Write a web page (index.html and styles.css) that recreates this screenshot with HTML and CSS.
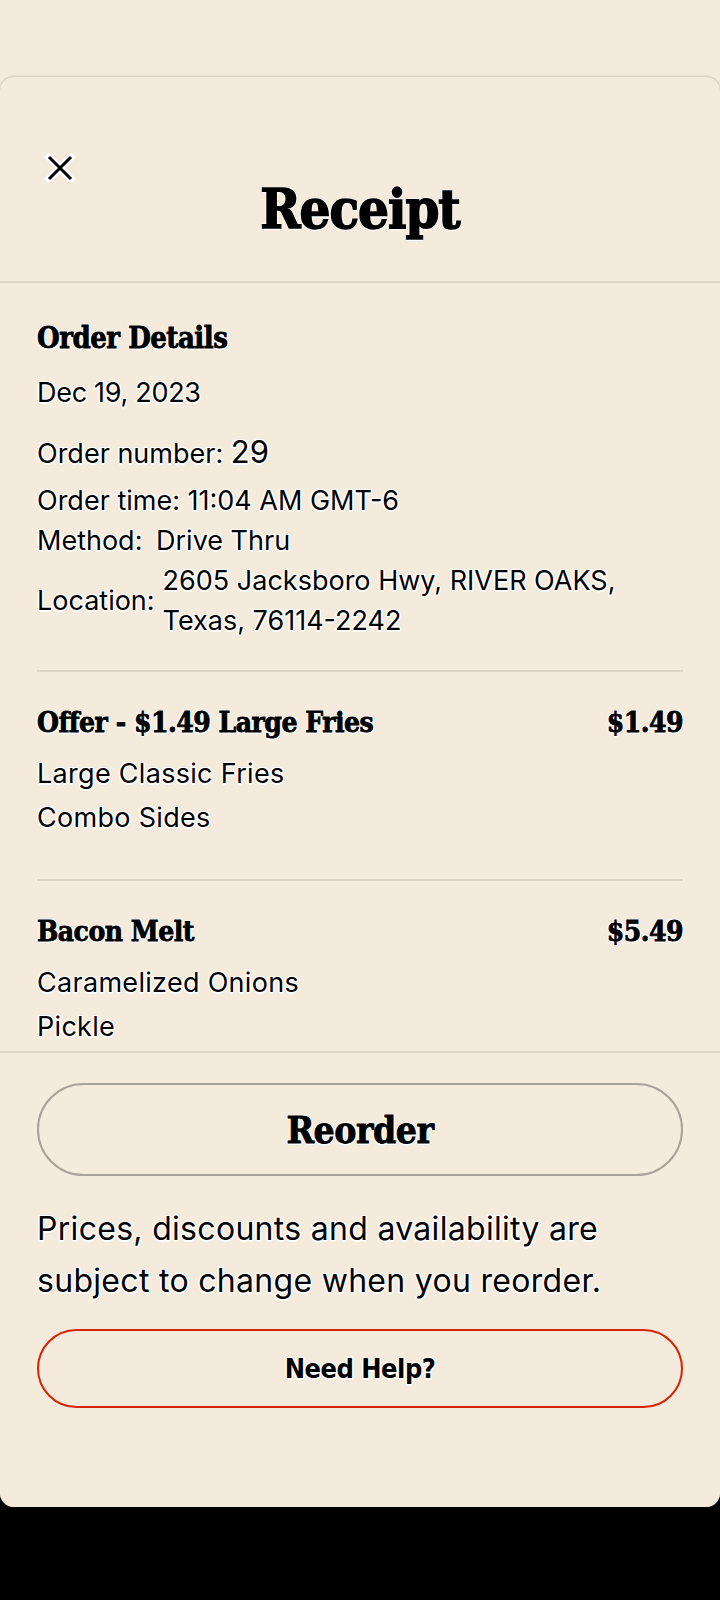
FILE: index.html
```html
<!DOCTYPE html>
<html lang="en">
  <head>
    <meta charset="UTF-8" />
    <meta name="viewport" content="width=device-width, initial-scale=1.0" />
    <title>Receipt</title>
    <link rel="stylesheet" href="styles.css">
  </head>
  <body>
    <div class="app">
      <div class="sheet">
        <div class="sheet-header">
          <button class="close-button" aria-label="Close">
            <svg width="30" height="30" viewBox="0 0 30 30">
              <path d="M4 4L26 26M26 4L4 26" stroke="#fff" stroke-width="7" stroke-linecap="round" fill="none" />
              <path d="M4 4L26 26M26 4L4 26" stroke="#000" stroke-width="3" fill="none" />
            </svg>
          </button>
          <h1 class="sheet-title">Receipt</h1>
        </div>

        <div class="receipt-body">
          <div class="order-details">
            <h2 class="section-title">Order Details</h2>
            <p class="order-date">Dec 19, 2023</p>
            <p class="detail-row order-number">Order number: <span class="big-number">29</span></p>
            <p class="detail-row">Order time: 11:04 AM GMT-6</p>
            <p class="detail-row method">Method: <span>Drive Thru</span></p>
            <div class="detail-row location">
              <span>Location:</span>
              <span class="address">2605 Jacksboro Hwy, RIVER OAKS,<br />Texas, 76114-2242</span>
            </div>
          </div>

          <div class="order-item">
            <div class="item-head">
              <span>Offer - $1.49 Large Fries</span>
              <span>$1.49</span>
            </div>
            <p class="item-option">Large Classic Fries</p>
            <p class="item-option">Combo Sides</p>
          </div>

          <div class="order-item">
            <div class="item-head">
              <span>Bacon Melt</span>
              <span>$5.49</span>
            </div>
            <p class="item-option">Caramelized Onions</p>
            <p class="item-option">Pickle</p>
          </div>
        </div>

        <div class="sheet-footer">
          <button class="reorder-button">Reorder</button>
          <p class="reorder-note">Prices, discounts and availability are subject to change when you reorder.</p>
          <button class="help-button">Need Help?</button>
        </div>
      </div>
    </div>
  </body>
</html>
```

FILE: styles.css
```css
* {
  box-sizing: border-box;
  margin: 0;
  padding: 0;
}

body {
  background-color: #000;
  font-family: Inter, Roboto, "Liberation Sans", sans-serif;
  color: #000;
}

.app {
  height: 1507px;
  padding-top: 77px;
  background-color: #f5ebdc;
  border-radius: 0 0 14px 14px;
}

.sheet {
  height: 1430px;
  display: flex;
  flex-direction: column;
  background-color: #f5ebdc;
  border-radius: 14px;
  box-shadow: 0 0 3px rgba(0, 0, 0, 0.3);
  overflow: hidden;
}

.sheet-header {
  display: flex;
  flex-direction: column;
  padding: 76px 0 46px;
  border-bottom: 2px solid #ded4c5;
}

.close-button {
  width: 30px;
  height: 30px;
  margin-left: 45px;
  border: none;
  background: none;
  display: flex;
}

.sheet-title,
.section-title,
.item-head,
.reorder-button {
  font-family: "DejaVu Serif Condensed", "DejaVu Serif", serif;
  font-weight: bold;
  letter-spacing: -0.5px;
  -webkit-text-stroke: 0.8px #000;
}

.sheet-title,
.section-title,
.item-head,
.reorder-button,
.help-button,
p,
.detail-row {
  text-shadow: 1.5px 0 0 #fff, -1.5px 0 0 #fff, 0 1.5px 0 #fff, 0 -1.5px 0 #fff,
    1px 1px 0 #fff, -1px -1px 0 #fff, 1px -1px 0 #fff, -1px 1px 0 #fff;
}

.sheet-title {
  font-size: 54px;
  line-height: 52px;
  text-align: center;
  letter-spacing: -1px;
  -webkit-text-stroke: 1.5px #000;
}

.receipt-body {
  flex: 1;
  overflow: hidden;
  padding: 0 37px;
}

.order-details {
  padding: 37px 0 29px;
}

.section-title {
  font-size: 29px;
  line-height: 36px;
}

.order-date {
  margin-top: 17px;
  font-size: 27px;
  line-height: 40px;
  letter-spacing: -0.3px;
}

.detail-row {
  font-size: 27px;
  line-height: 40px;
}

.order-number {
  margin-top: 19px;
  margin-bottom: 7px;
}

.big-number {
  font-size: 31px;
}

.method span {
  margin-left: 6px;
}

.location {
  display: flex;
  align-items: center;
  gap: 8px;
}

.order-item {
  padding: 33px 0 39px;
  border-top: 2px solid #ded4c5;
}

.item-head {
  display: flex;
  justify-content: space-between;
  font-size: 28px;
  line-height: 36px;
}

.item-head + .item-option {
  margin-top: 11px;
}

.item-option {
  font-size: 27px;
  line-height: 44px;
  letter-spacing: 0.3px;
}

.sheet-footer {
  padding: 30px 37px 99px;
  border-top: 2px solid #ded4c5;
}

.reorder-button,
.help-button {
  display: block;
  width: 100%;
  background: none;
  border-radius: 999px;
  color: #000;
}

.reorder-button {
  height: 93px;
  border: 2px solid #a9a298;
  font-size: 37px;
}

.reorder-note {
  margin-top: 27px;
  padding-right: 50px;
  font-size: 32px;
  line-height: 52px;
  letter-spacing: 0.3px;
}

.help-button {
  height: 79px;
  margin-top: 22px;
  border: 2px solid #d62300;
  font-family: "DejaVu Sans Condensed", "DejaVu Sans", sans-serif;
  font-weight: bold;
  font-size: 27px;
  letter-spacing: -0.5px;
}
```
